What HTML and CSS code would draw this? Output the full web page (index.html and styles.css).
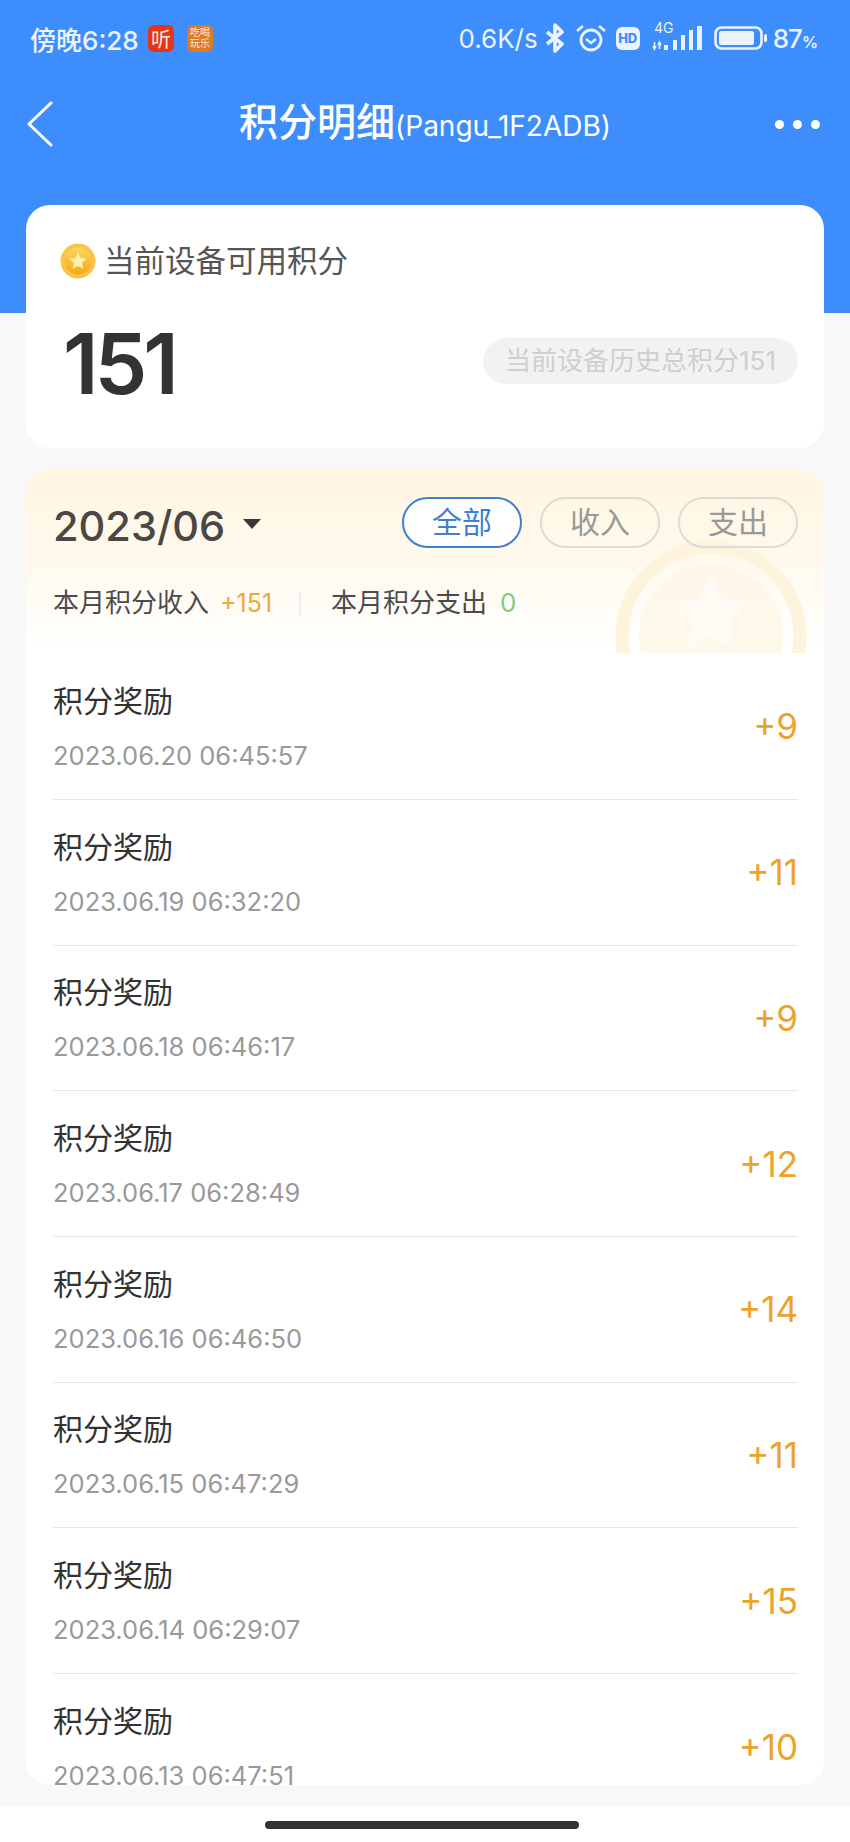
FILE: index.html
```html
<!DOCTYPE html>
<html lang="zh-CN">
<head>
    <meta charset="UTF-8">
    <meta name="viewport" content="width=device-width, initial-scale=1.0">
    <title>积分明细</title>
    <link rel="stylesheet" href="styles.css">
</head>
<body>
    <div class="page">
        <header class="top">
            <div class="status">
                <div class="status-left">
                    <span class="clock">傍晚6:28</span>
                    <span class="badge badge-red">听</span>
                    <span class="badge badge-orange">吃喝<br>玩乐</span>
                </div>
                <div class="status-right">
                    <span class="speed">0.6K/s</span>
                    <svg class="icon-bt" width="20" height="30" viewBox="0 0 20 30"><path d="M2 9l15 12-7 7V2l7 7L2 21" fill="none" stroke="#eaf3ff" stroke-width="3.6" stroke-linejoin="round"/></svg>
                    <svg class="icon-alarm" width="32" height="30" viewBox="0 0 32 30"><circle cx="16" cy="17" r="10" fill="none" stroke="#eaf3ff" stroke-width="2.8"/><path d="M11 16l5 4 5-4" fill="none" stroke="#eaf3ff" stroke-width="2.4"/><path d="M2 8l6-5M30 8l-6-5" stroke="#eaf3ff" stroke-width="2.6" fill="none"/></svg>
                    <span class="hd">HD</span>
                    <svg class="icon-signal" width="52" height="32" viewBox="0 0 52 32"><text x="2" y="14" font-size="14" font-family="Inter, sans-serif" fill="#eaf3ff">4G</text><path d="M2.500 23v7M1 27l1.500 3 1.500-3M7.500 30v-7M6 26l1.500-3 1.500 3" fill="none" stroke="#eaf3ff" stroke-width="1.600"/><rect x="12" y="26" width="4" height="5" fill="#eaf3ff"/><rect x="21" y="21" width="4" height="10" fill="#eaf3ff"/><rect x="29" y="16" width="4" height="15" fill="#eaf3ff"/><rect x="37" y="11" width="4" height="20" fill="#eaf3ff"/><rect x="45" y="7" width="5" height="24" fill="#eaf3ff"/></svg>
                    <svg class="icon-battery" width="54" height="24" viewBox="0 0 54 24"><rect x="1.500" y="1.500" width="46" height="21" rx="6" fill="none" stroke="#eaf3ff" stroke-width="2.600"/><rect x="5" y="5" width="35" height="14" rx="2.500" fill="#eaf3ff"/><rect x="50" y="8" width="3" height="8" rx="1.500" fill="#eaf3ff"/></svg>
                    <span class="percent">87<small>%</small></span>
                </div>
            </div>
            <nav class="nav">
                <svg class="back" width="28" height="46" viewBox="0 0 28 46"><path d="M25 2L3 23l22 21" fill="none" stroke="#fff" stroke-width="3" stroke-linecap="round" stroke-linejoin="round"/></svg>
                <h1 class="title">积分明细<small>(Pangu_1F2ADB)</small></h1>
                <div class="more"><i></i><i></i><i></i></div>
            </nav>
        </header>

        <main class="content">
            <section class="card points">
                <div class="points-label">
                    <svg width="36" height="36" viewBox="0 0 36 36">
                        <defs>
                            <linearGradient id="coin" x1="0" y1="0" x2="0" y2="1">
                                <stop offset="0" stop-color="#fcd765"/>
                                <stop offset="1" stop-color="#f7a90f"/>
                            </linearGradient>
                        </defs>
                        <circle cx="18" cy="18" r="17.500" fill="#f9c449"/>
                        <circle cx="18" cy="18" r="13.500" fill="url(#coin)"/>
                        <path d="M18 9.500l2.600 5.400 5.900.8-4.300 4.100 1 5.900-5.200-2.800-5.200 2.800 1-5.900-4.300-4.100 5.900-.8z" fill="#fdeeb4"/>
                    </svg>
                    <span>当前设备可用积分</span>
                </div>
                <div class="points-row">
                    <span class="points-num">151</span>
                    <span class="points-total">当前设备历史总积分151</span>
                </div>
            </section>

            <section class="card records">
                <div class="month">
                    <svg class="watermark" width="192" height="113" viewBox="0 0 192 113">
                        <circle cx="96" cy="96" r="89" fill="none" stroke="#fef3dc" stroke-width="13"/>
                        <circle cx="96" cy="96" r="72" fill="#fef6e6" opacity=".8"/>
                        <path d="M96 35l12 24 27 4-20 19 5 27-24-13-24 13 5-27-20-19 27-4z" fill="#fffbf4"/>
                    </svg>
                    <div class="month-top">
                        <div class="month-pick">
                            <span class="month-date">2023/06</span>
                            <i class="caret"></i>
                        </div>
                        <div class="chips">
                            <span class="chip chip-on">全部</span>
                            <span class="chip">收入</span>
                            <span class="chip">支出</span>
                        </div>
                    </div>
                    <div class="month-sum">
                        <span>本月积分收入</span>
                        <span class="sum-in">+151</span>
                        <i class="sum-line"></i>
                        <span>本月积分支出</span>
                        <span class="sum-out">0</span>
                    </div>
                </div>

                <ul class="list">
                    <li class="row">
                        <div><p class="row-name">积分奖励</p><p class="row-time">2023.06.20 06:45:57</p></div>
                        <span class="row-val">+9</span>
                    </li>
                    <li class="row">
                        <div><p class="row-name">积分奖励</p><p class="row-time">2023.06.19 06:32:20</p></div>
                        <span class="row-val">+11</span>
                    </li>
                    <li class="row">
                        <div><p class="row-name">积分奖励</p><p class="row-time">2023.06.18 06:46:17</p></div>
                        <span class="row-val">+9</span>
                    </li>
                    <li class="row">
                        <div><p class="row-name">积分奖励</p><p class="row-time">2023.06.17 06:28:49</p></div>
                        <span class="row-val">+12</span>
                    </li>
                    <li class="row">
                        <div><p class="row-name">积分奖励</p><p class="row-time">2023.06.16 06:46:50</p></div>
                        <span class="row-val">+14</span>
                    </li>
                    <li class="row">
                        <div><p class="row-name">积分奖励</p><p class="row-time">2023.06.15 06:47:29</p></div>
                        <span class="row-val">+11</span>
                    </li>
                    <li class="row">
                        <div><p class="row-name">积分奖励</p><p class="row-time">2023.06.14 06:29:07</p></div>
                        <span class="row-val">+15</span>
                    </li>
                    <li class="row">
                        <div><p class="row-name">积分奖励</p><p class="row-time">2023.06.13 06:47:51</p></div>
                        <span class="row-val">+10</span>
                    </li>
                </ul>
            </section>
        </main>

        <footer class="home-bar"><i></i></footer>
    </div>
</body>
</html>
```

FILE: styles.css
```css
/* Basic Styles */
* {
    box-sizing: border-box;
}

body {
    margin: 0;
    font-family: Inter, "Noto Sans CJK SC", sans-serif;
    background-color: #f8f8f8;
}

p, ul, h1 {
    margin: 0;
    padding: 0;
}

.page {
    display: flex;
    flex-direction: column;
    height: 1842px;
    overflow: hidden;
}

/* Blue header */
.top {
    height: 313px;
    flex-shrink: 0;
    background-color: #3d8efc;
    color: #fff;
}

.status {
    display: flex;
    justify-content: space-between;
    align-items: center;
    height: 76px;
    padding: 0 33px 0 30px;
    color: #eaf3ff;
}

.status-left, .status-right {
    display: flex;
    align-items: center;
}

.clock {
    font-size: 26px;
    font-weight: 500;
    width: 118px;
}

.badge {
    display: flex;
    align-items: center;
    justify-content: center;
    width: 26px;
    height: 27px;
    border-radius: 6px;
    text-align: center;
    color: #ffe9dc;
}

.badge-red {
    background-color: #e6341a;
    font-size: 20px;
}

.badge-orange {
    margin-left: 13px;
    background-color: #e07b22;
    font-size: 10px;
    line-height: 11px;
}

.speed {
    font-size: 26px;
    margin-right: 7px;
}

.icon-bt {
    margin-right: 10px;
}

.icon-alarm {
    margin-right: 9px;
}

.hd {
    width: 24px;
    height: 23px;
    margin-right: 12px;
    border-radius: 6px;
    background-color: #eaf3ff;
    color: #3d8efc;
    font-size: 13px;
    font-weight: 800;
    line-height: 23px;
    text-align: center;
}

.icon-signal {
    margin: 0 10px 6px 0;
}

.icon-battery {
    margin-right: 5px;
}

.percent {
    font-size: 26px;
    font-weight: 500;
    letter-spacing: -1px;
}

.percent small {
    font-size: 16px;
    font-weight: 600;
}

.nav {
    position: relative;
    display: flex;
    justify-content: space-between;
    align-items: center;
    height: 96px;
    padding: 0 30px 0 26px;
}

.title {
    position: absolute;
    left: 0;
    right: 0;
    text-align: center;
    font-size: 39px;
    font-weight: 500;
    line-height: 96px;
}

.title small {
    font-size: 28px;
    font-weight: 400;
}

.more {
    display: flex;
    gap: 9px;
}

.more i {
    width: 9px;
    height: 9px;
    border-radius: 50%;
    background-color: #fff;
}

/* Cards */
.content {
    flex: 1;
    min-height: 0;
    margin-top: -108px;
    padding: 0 26px;
}

.card {
    position: relative;
    background-color: #fff;
    border-radius: 24px;
}

.points {
    height: 243px;
    padding: 38px 26px 0 34px;
}

.points-label {
    display: flex;
    align-items: center;
    gap: 8px;
    font-size: 30.5px;
    line-height: 36px;
    color: #555;
}

.points-row {
    display: flex;
    justify-content: space-between;
    align-items: center;
    margin-top: 40px;
}

.points-num {
    margin-left: 3px;
    font-size: 84px;
    font-weight: 600;
    line-height: 90px;
    letter-spacing: -4px;
    color: #333;
}

.points-total {
    height: 46px;
    margin-bottom: 6px;
    padding: 0 22px;
    border-radius: 23px;
    background-color: #f2f2f2;
    color: #cfcfcf;
    font-size: 26px;
    line-height: 46px;
}

.records {
    height: 1315px;
    margin-top: 22px;
}

.month {
    position: relative;
    height: 183px;
    padding: 27px 26px 0 27px;
    border-radius: 24px 24px 0 0;
    overflow: hidden;
    background: linear-gradient(#fff5e1, #fff9ec 45%, #ffffff);
}

.watermark {
    position: absolute;
    right: 17px;
    bottom: 0;
}

.month-top, .month-sum, .month-pick, .chips {
    position: relative;
    display: flex;
    align-items: center;
}

.month-top {
    justify-content: space-between;
    align-items: flex-start;
}

.month-pick {
    padding-top: 4px;
}

.month-date {
    font-size: 41.5px;
    font-weight: 500;
    color: #4a4744;
}

.caret {
    margin: 0 0 4px 18px;
    border-left: 9px solid transparent;
    border-right: 9px solid transparent;
    border-top: 10px solid #3a3633;
}

.chips {
    gap: 18px;
}

.chip {
    width: 120px;
    height: 51px;
    border: 2px solid #dedad4;
    border-radius: 26px;
    color: #999;
    font-size: 30px;
    line-height: 47px;
    text-align: center;
}

.chip-on {
    border-color: #3f80d0;
    background-color: #fff;
    color: #3f80d0;
}

.month-sum {
    margin-top: 36px;
    font-size: 26px;
    line-height: 32px;
    color: #4b4b4b;
}

.sum-in {
    margin-left: 11px;
    font-size: 25px;
    color: #eda93c;
}

.sum-line {
    width: 2px;
    height: 23px;
    margin: 0 30px 0 27px;
    background-color: #ececec;
}

.sum-out {
    margin-left: 13px;
    color: #7fce7f;
}

/* Record rows */
.list {
    list-style: none;
    padding: 0 26px 0 27px;
}

.row {
    display: flex;
    justify-content: space-between;
    align-items: center;
    height: 145.67px;
    border-bottom: 1px solid #e6e6e6;
}

.row:first-child {
    height: 147px;
}

.row:last-child {
    border-bottom: none;
}

.row-name {
    font-size: 30px;
    line-height: 40px;
    color: #333;
}

.row-time {
    margin-top: 19px;
    font-size: 25.5px;
    line-height: 32px;
    color: #999;
}

.row-val {
    font-size: 35px;
    color: #eca32a;
}

/* Bottom bar */
.home-bar {
    display: flex;
    justify-content: center;
    align-items: center;
    flex-shrink: 0;
    height: 36px;
    padding: 1px 6px 0 0;
    background-color: #fff;
}

.home-bar i {
    width: 314px;
    height: 8px;
    border-radius: 4px;
    background-color: #333;
}
```
